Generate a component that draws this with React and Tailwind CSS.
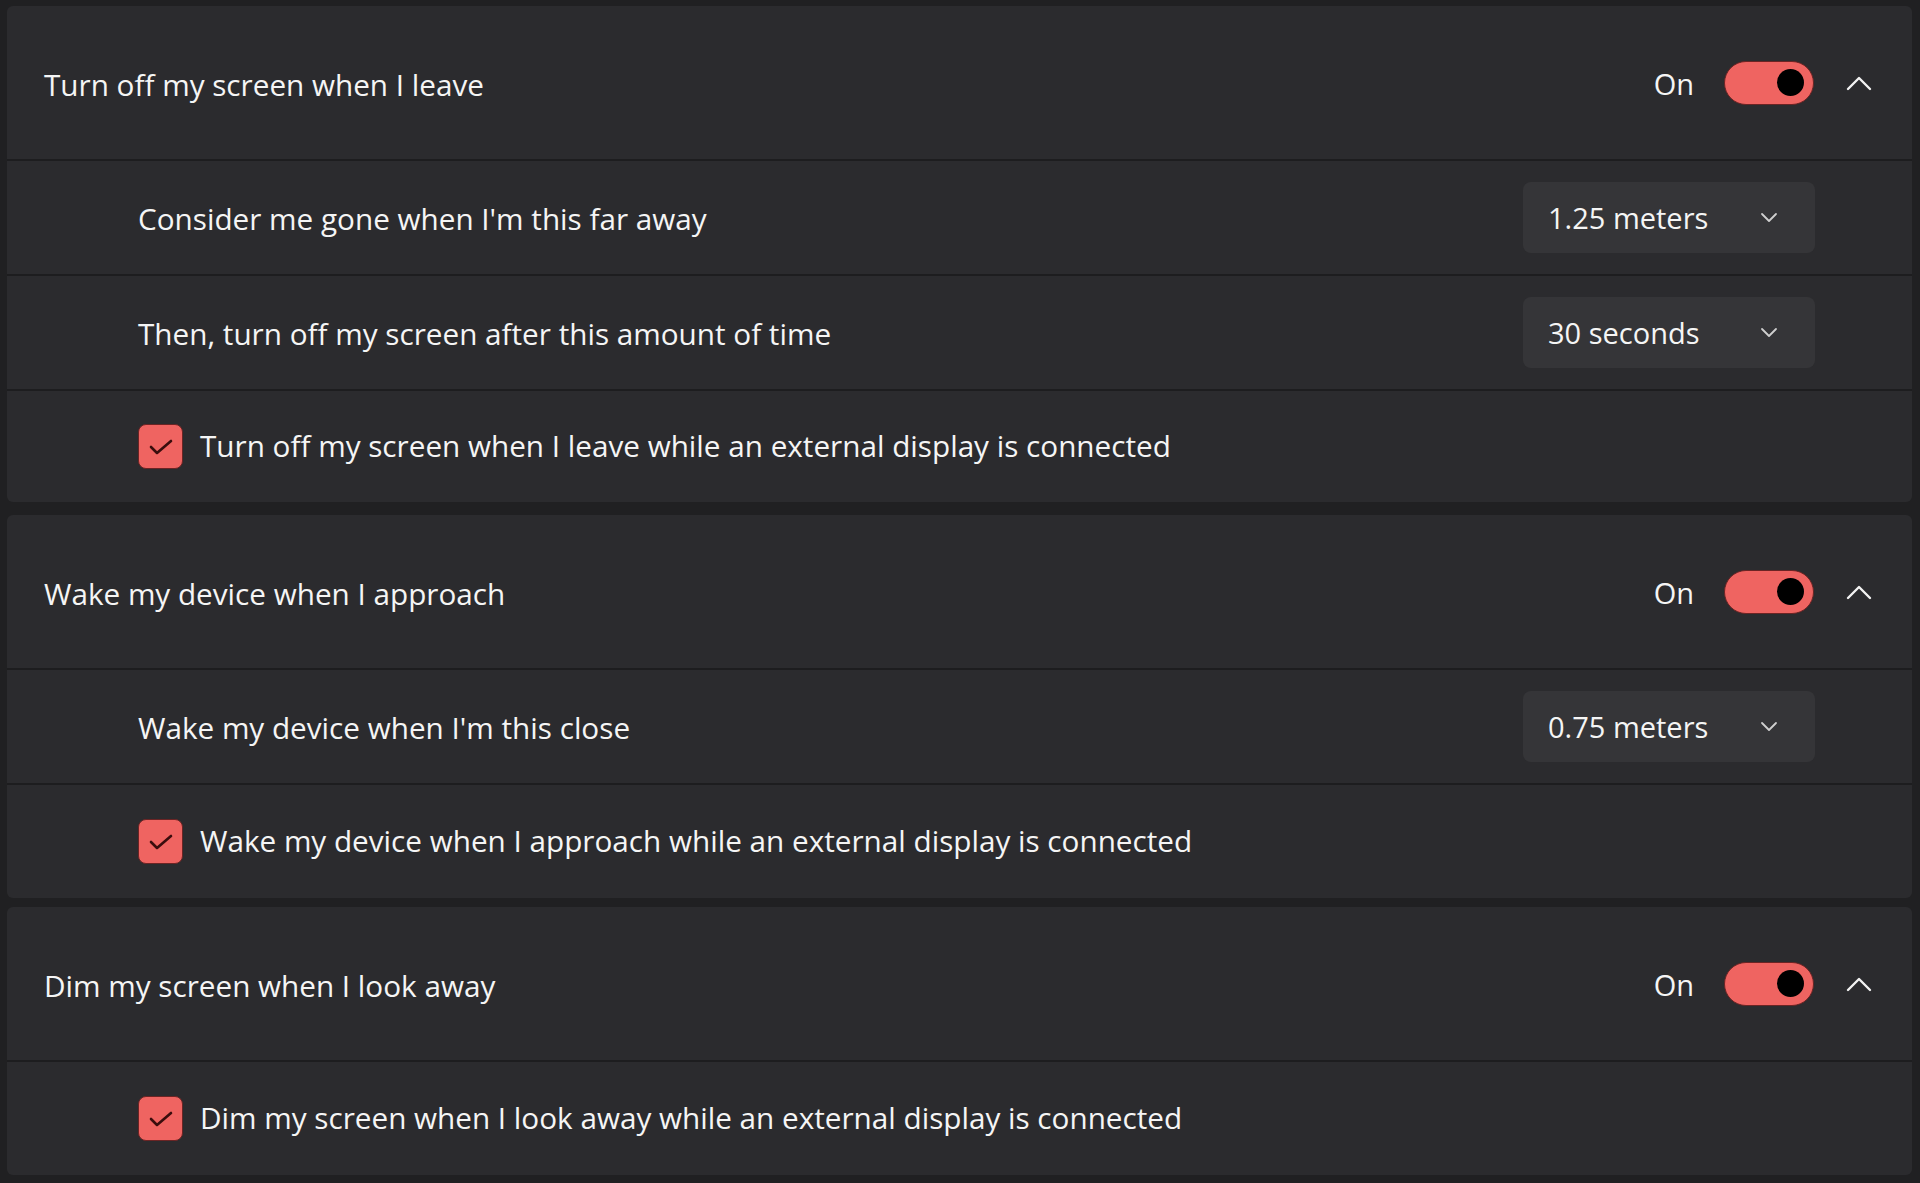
import React from "react";

const font = { fontFamily: '"Open Sans", "Noto Sans", sans-serif' };

function Toggle() {
  return (
    <div className="w-[90px] h-[44px] rounded-full bg-[#ef6461] border border-[#6b2424] flex items-center justify-end pr-[9px]">
      <div className="w-[27px] h-[27px] rounded-full bg-black" />
    </div>
  );
}

function ChevronUp() {
  return (
    <svg width="26" height="16" viewBox="0 0 26 16" fill="none">
      <polyline points="2,14 13,3 24,14" stroke="#f2f2f2" strokeWidth="2.4" strokeLinecap="round" strokeLinejoin="round" />
    </svg>
  );
}

function ChevronDown() {
  return (
    <svg width="18" height="11" viewBox="0 0 18 11" fill="none">
      <polyline points="2,2 9,9 16,2" stroke="#cfcfcf" strokeWidth="1.8" strokeLinecap="round" strokeLinejoin="round" />
    </svg>
  );
}

function Header({ title }) {
  return (
    <div className="h-[153px] flex items-center pl-[37px] pr-[40px]">
      <div className="flex-1 text-[29.7px] text-[#f5f5f5] pt-[5px]">{title}</div>
      <div className="text-[29px] text-[#f5f5f5] mr-[30px] pt-[2px]">On</div>
      <Toggle />
      <div className="ml-[32px] flex items-center">
        <ChevronUp />
      </div>
    </div>
  );
}

function SelectRow({ label, value }) {
  return (
    <div className="h-[113px] border-t-2 border-[#1d1d1f] box-content flex items-center pl-[131px] pr-[97px]">
      <div className="flex-1 text-[29.7px] text-[#f5f5f5] pt-[3px]">{label}</div>
      <div className="w-[292px] h-[71px] rounded-[8px] bg-[#353538] flex items-center pl-[25px] pr-[37px]">
        <div className="flex-1 text-[29px] text-[#f5f5f5]">{value}</div>
        <ChevronDown />
      </div>
    </div>
  );
}

function CheckRow({ label, h }) {
  return (
    <div className={"border-t-2 border-[#1d1d1f] box-content flex items-center pl-[131px] " + h}>
      <div className="w-[45px] h-[45px] rounded-[8px] bg-[#ef6461] border border-[#6b2424] flex items-center justify-center">
        <svg width="24" height="16" viewBox="0 0 24 16" fill="none">
          <polyline points="2,8 8,14 22,2" stroke="#3a0d0d" strokeWidth="2.6" strokeLinecap="round" strokeLinejoin="round" />
        </svg>
      </div>
      <div className="ml-[17px] text-[29.7px] text-[#f5f5f5]">{label}</div>
    </div>
  );
}

export default function App() {
  return (
    <div className="min-h-screen bg-[#202022] pl-[7px] pr-[8px] pt-[6px]" style={font}>
      <div className="rounded-[6px] bg-[#2b2b2e] overflow-hidden">
        <Header title="Turn off my screen when I leave" />
        <SelectRow label="Consider me gone when I'm this far away" value="1.25 meters" />
        <SelectRow label="Then, turn off my screen after this amount of time" value="30 seconds" />
        <CheckRow label="Turn off my screen when I leave while an external display is connected" h="h-[111px]" />
      </div>
      <div className="mt-[13px] rounded-[6px] bg-[#2b2b2e] overflow-hidden">
        <Header title="Wake my device when I approach" />
        <SelectRow label="Wake my device when I'm this close" value="0.75 meters" />
        <CheckRow label="Wake my device when I approach while an external display is connected" h="h-[113px]" />
      </div>
      <div className="mt-[9px] rounded-[6px] bg-[#2b2b2e] overflow-hidden">
        <Header title="Dim my screen when I look away" />
        <CheckRow label="Dim my screen when I look away while an external display is connected" h="h-[113px]" />
      </div>
    </div>
  );
}
